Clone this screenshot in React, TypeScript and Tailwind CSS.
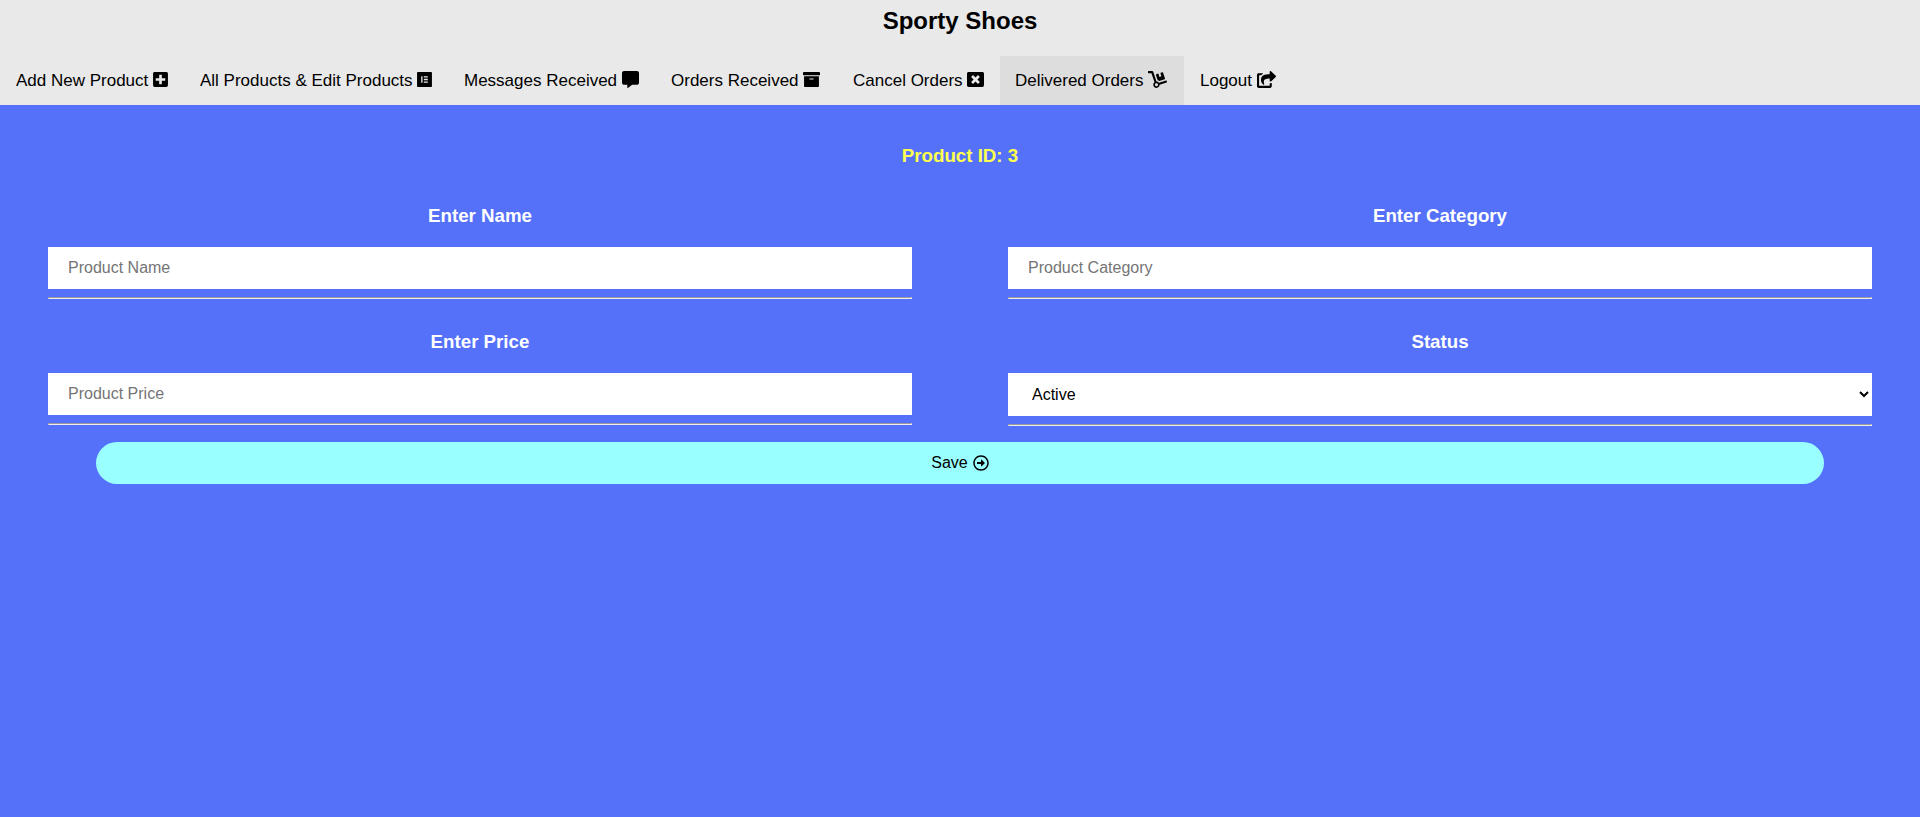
import React from 'react';
import { FaPlusSquare, FaElementor, FaArchive, FaWindowClose, FaDolly, FaShareSquare, FaRegArrowAltCircleRight, FaCommentAlt } from 'react-icons/fa';

const links = [
  { label: 'Add New Product', Icon: FaPlusSquare, box: 'w-[184px] pl-4', size: 'h-[17px] w-[15px]' },
  { label: 'All Products & Edit Products', Icon: FaElementor, box: 'w-[264px] pl-4', size: 'h-[17px] w-[15px]' },
  { label: 'Messages Received', Icon: FaCommentAlt, box: 'w-[207px] pl-4', size: 'size-[17px]' },
  { label: 'Orders Received', Icon: FaArchive, box: 'w-[182px] pl-4', size: 'size-[17px]' },
  { label: 'Cancel Orders', Icon: FaWindowClose, box: 'w-[163px] pl-4', size: 'size-[17px]' },
  { label: 'Delivered Orders', Icon: FaDolly, box: 'w-[184px] pl-[15px] bg-[#dddddd]', size: 'h-[17px] w-[19px]' },
  { label: 'Logout', Icon: FaShareSquare, box: 'w-[108px] pl-4', size: 'h-[17px] w-[19px]' },
];

function Field({ title, children }: { title: string; children: React.ReactNode }) {
  return (
    <section className="mx-12">
      <h3 className="mb-[21px] text-center text-[18.72px] leading-[21px] font-bold text-white">{title}</h3>
      {children}
      <hr className="mt-2 h-0.5 border border-t-[#9a9a9a] border-r-[#eeeeee] border-b-[#eeeeee] border-l-[#9a9a9a]" />
    </section>
  );
}

const input = 'block h-[42px] w-full bg-white px-5 text-base text-black outline-none placeholder:text-[#757575]';

export default function App() {
  return (
    <div className="min-h-screen bg-[#5571fa] font-['Liberation_Sans',Arial,sans-serif] text-black">
      <header className="h-[105px] bg-[#e9e9e9]">
        <h2 className="h-14 pt-[7px] text-center text-2xl leading-[27px] font-bold">Sporty Shoes</h2>
        <nav className="flex h-[49px]">
          {links.map(({ label, Icon, box, size }) => (
            <a key={label} href="#" className={`flex shrink-0 items-center text-[17px] leading-5 whitespace-pre ${box}`}>
              <span>{label} </span>
              <Icon className={`mb-0.5 shrink-0 ${size}`} />
            </a>
          ))}
        </nav>
      </header>
      <main>
        <h3 className="pt-10 text-center text-[18.72px] leading-[21px] font-bold text-[#ffff4d]">Product ID: 3</h3>
        <div className="grid grid-cols-2 gap-y-8 pt-[39px]">
          <Field title="Enter Name"><input className={input} placeholder="Product Name" /></Field>
          <Field title="Enter Category"><input className={input} placeholder="Product Category" /></Field>
          <Field title="Enter Price"><input className={input} placeholder="Product Price" /></Field>
          <Field title="Status">
            <select className="block h-[43px] w-full bg-white px-5 text-base text-black"><option>Active</option></select>
          </Field>
        </div>
        <button className="mx-24 mt-4 flex h-[42px] w-[1728px] items-center justify-center gap-[5px] rounded-full bg-[#99ffff] text-base">
          Save <FaRegArrowAltCircleRight className="size-4" />
        </button>
      </main>
    </div>
  );
}
